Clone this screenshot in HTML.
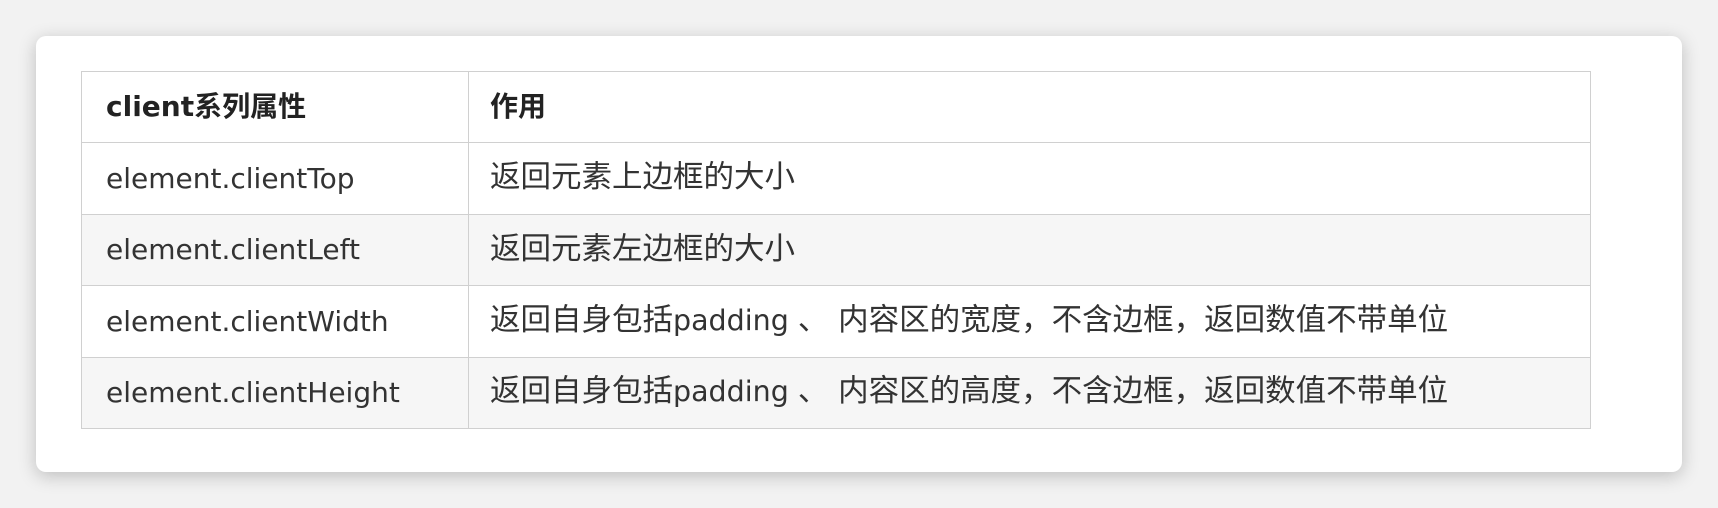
<!DOCTYPE html>
<html><head><meta charset="utf-8"><style>
html,body{margin:0;padding:0;}
body{width:1718px;height:508px;background:#f2f2f2;position:relative;overflow:hidden;font-family:"DejaVu Sans","Noto Sans CJK SC",sans-serif;}
.card{position:absolute;left:36px;top:36px;width:1646px;height:436px;background:#fff;border-radius:10px;box-shadow:0 4px 18px rgba(0,0,0,0.22);}
table{position:absolute;left:45px;top:35px;width:1510px;border-collapse:collapse;table-layout:fixed;}
td,th{border:1.5px solid #d0d0d0;height:70.4px;padding:0 0 0 21px;text-align:left;font-size:28px;color:#333;font-weight:normal;vertical-align:middle;white-space:nowrap;line-height:1.2;}
th{font-weight:bold;color:#222;}
td:first-child,th:first-child{width:362px;padding-left:24px;}
td+td{font-size:30.5px;}
td+td span{font-size:28.5px;}
tr:nth-child(odd) td{background:#f6f6f6;}
</style></head><body>
<div class="card">
<table>
<tr><th>client系列属性</th><th>作用</th></tr>
<tr><td>element.clientTop</td><td>返回元素上边框的大小</td></tr>
<tr><td>element.clientLeft</td><td>返回元素左边框的大小</td></tr>
<tr><td>element.clientWidth</td><td>返回自身包括<span>padding </span>、 内容区的宽度，不含边框，返回数值不带单位</td></tr>
<tr><td>element.clientHeight</td><td>返回自身包括<span>padding </span>、 内容区的高度，不含边框，返回数值不带单位</td></tr>
</table>
</div>
</body></html>
